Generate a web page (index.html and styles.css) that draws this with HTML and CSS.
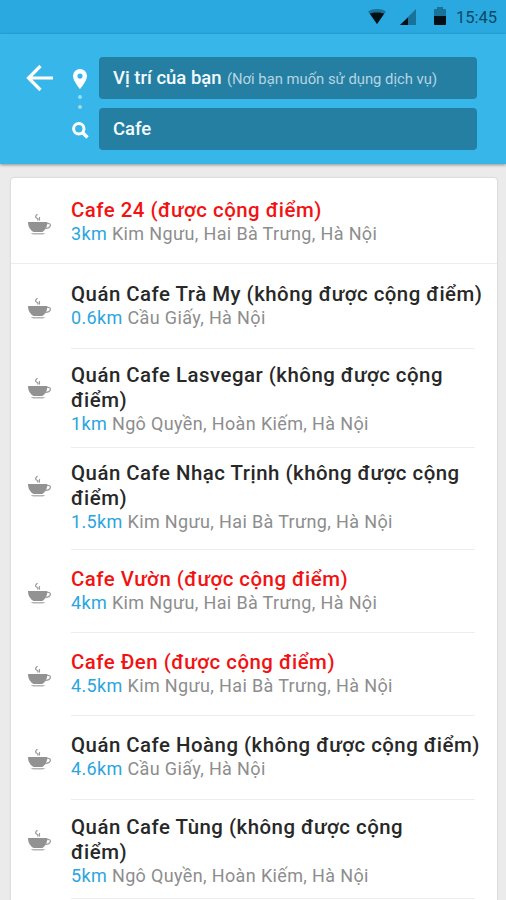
FILE: index.html
```html
<!DOCTYPE html>
<html lang="vi">
<head>
<meta charset="utf-8">
<title>Cafe</title>
<link rel="stylesheet" href="styles.css">
</head>
<body>
<svg class="defs" aria-hidden="true">
  <symbol id="cup" viewBox="0 0 24 22">
    <path d="M0 8h19.300c0 5-2.300 8.200-5 10H5.500C2.500 16.200 0 13 0 8z" fill="#929292"/>
    <path d="M18.800 9.500c5-1.300 5.200 4.800-1.800 5" fill="none" stroke="#a0a0a0" stroke-width="1.300"/>
    <path d="M2.500 19h15l-2.500 1.500H5z" fill="#b4b4b4"/>
    <path d="M9.500 0c-2.600 2.200-2.200 3.400-.6 4.300s1 1.500.6 2.200M12 3.200c-1.700 1 .2 1.900-.8 3.300" fill="none" stroke="#999" stroke-width="1.200"/>
  </symbol>
</svg>
<div class="status">
  <svg class="wifi" width="18" height="16" viewBox="0 0 18 16"><path d="M0 2.500C5-.8 13-.8 18 2.500L9 15z" fill="#197299"/><path d="M1.800 4.500c4-1.500 10.400-1.500 14.400 0L9 15z" fill="#021016"/></svg>
  <svg class="signal" width="16" height="16" viewBox="0 0 16 16"><path d="M0 16 16 0v16z" fill="#197299"/><path d="M0 16 8 8.500V16z" fill="#021016"/></svg>
  <svg class="battery" width="12" height="18" viewBox="0 0 12 18"><path d="M0 3q0-1 1-1h2V0h6v2h2q1 0 1 1v7H0z" fill="#197299"/><path d="M0 9h12v8q0 1-1 1H1q-1 0-1-1z" fill="#021016"/></svg>
  <span class="clock">15:45</span>
</div>
<header class="header">
  <svg class="back" width="28" height="28" viewBox="0 0 28 28"><path d="M27 14H2.500M14.500 2 2.500 14l12 12" fill="none" stroke="#fff" stroke-width="3.200"/></svg>
  <div class="markers">
    <svg width="16" height="20" viewBox="0 0 16 20"><path fill-rule="evenodd" d="M8 0a7 7 0 0 0-7 7c0 5 7 13 7 13s7-8 7-13a7 7 0 0 0-7-7zm0 4.500a2.600 2.600 0 1 1 0 5.200 2.600 2.600 0 0 1 0-5.200z" fill="#fff"/></svg>
    <i class="dot"></i><i class="dot"></i>
    <svg class="search" width="17" height="17" viewBox="0 0 17 17"><circle cx="6.800" cy="6.800" r="5.200" fill="none" stroke="#fff" stroke-width="3"/><path d="m10.500 10.500 5 5" stroke="#fff" stroke-width="3.400"/></svg>
  </div>
  <div class="fields">
    <div class="field"><span class="place">Vị trí của bạn</span><span class="hint">(Nơi bạn muốn sử dụng dịch vụ)</span></div>
    <div class="field"><span class="query">Cafe</span></div>
  </div>
</header>
<main class="card">
  <section class="row first"><svg class="cup"><use href="#cup"/></svg><div class="info"><h2 class="red">Cafe 24 (được cộng điểm)</h2><p><b>3km</b> Kim Ngưu, Hai Bà Trưng, Hà Nội</p></div></section>
  <section class="row second"><svg class="cup"><use href="#cup"/></svg><div class="info"><h2>Quán Cafe Trà My (không được cộng điểm)</h2><p><b>0.6km</b> Cầu Giấy, Hà Nội</p></div></section>
  <section class="row double third"><svg class="cup"><use href="#cup"/></svg><div class="info"><h2>Quán Cafe Lasvegar (không được cộng<br>điểm)</h2><p><b>1km</b> Ngô Quyền, Hoàn Kiếm, Hà Nội</p></div></section>
  <section class="row double fourth"><svg class="cup"><use href="#cup"/></svg><div class="info"><h2>Quán Cafe Nhạc Trịnh (không được cộng<br>điểm)</h2><p><b>1.5km</b> Kim Ngưu, Hai Bà Trưng, Hà Nội</p></div></section>
  <section class="row"><svg class="cup"><use href="#cup"/></svg><div class="info"><h2 class="red">Cafe Vườn (được cộng điểm)</h2><p><b>4km</b> Kim Ngưu, Hai Bà Trưng, Hà Nội</p></div></section>
  <section class="row"><svg class="cup"><use href="#cup"/></svg><div class="info"><h2 class="red">Cafe Đen (được cộng điểm)</h2><p><b>4.5km</b> Kim Ngưu, Hai Bà Trưng, Hà Nội</p></div></section>
  <section class="row seventh"><svg class="cup"><use href="#cup"/></svg><div class="info"><h2>Quán Cafe Hoàng (không được cộng điểm)</h2><p><b>4.6km</b> Cầu Giấy, Hà Nội</p></div></section>
  <section class="row double eighth"><svg class="cup"><use href="#cup"/></svg><div class="info"><h2>Quán Cafe Tùng (không được cộng<br>điểm)</h2><p><b>5km</b> Ngô Quyền, Hoàn Kiếm, Hà Nội</p></div></section>
</main>
</body>
</html>
```
FILE: styles.css
```css
* { box-sizing: border-box; }
body { margin: 0; height: 900px; overflow: hidden; background: #ebebeb; font-family: Roboto, "Noto Sans", sans-serif; }
.defs { display: none; }
.status { height: 34px; background: #29a9df; display: flex; align-items: flex-start; padding: 8px 8px 0 368px; }
.status svg { flex: none; }
.wifi { margin-top: 1px; }
.signal { margin: 1px 0 0 14px; }
.battery { margin: -1px 0 0 18px; }
.clock { margin-left: 10px; font-size: 16.500px; line-height: 19px; color: #0b4863; white-space: nowrap; }
.header { height: 130px; background: #36b6e9; box-shadow: 0 1px 3px rgba(0,0,0,.4); display: flex; align-items: flex-start; padding: 23px 29px 0 26px; }
.back { margin-top: 7px; flex: none; }
.markers { width: 18px; margin: 12px 0 0 17px; display: flex; flex-direction: column; align-items: center; flex: none; }
.dot { width: 4px; height: 4px; border-radius: 50%; background: #9bdcf4; margin-top: 6px; }
.search { margin-top: 13px; }
.fields { flex: 1; margin-left: 10px; display: grid; gap: 9px; }
.field { height: 42px; border-radius: 4px; background: #257fa3; padding-left: 14px; display: flex; align-items: baseline; line-height: 42px; color: #f4fbfe; white-space: nowrap; }
.place, .query { font-size: 18.500px; font-weight: 500; }
.place { width: 109px; }
.hint { margin-left: 5px; font-size: 14.800px; color: #b5d5e2; }
.card { margin: 14px 9px 0 11px; height: 740px; background: #fff; border-radius: 3px 3px 0 0; box-shadow: 0 0 2px rgba(0,0,0,.22); overflow: hidden; }
.row { display: flex; height: 83px; padding-left: 17px; --top: 17px; }
.cup { width: 24px; height: 22px; margin-top: calc(var(--top) + 16px); flex: none; }
.info { flex: 1; min-width: 0; margin: 0 22px 0 19px; padding-top: var(--top); border-bottom: 1px solid #ededed; white-space: nowrap; }
.double .cup { margin-top: calc(var(--top) + 15px); }
.first { height: 86px; --top: 20px; border-bottom: 1px solid #ededed; }
.first .info { border: 0; }
.second { height: 85px; --top: 18px; }
.third { height: 99px; --top: 14px; }
.fourth { height: 102px; --top: 13px; }
.seventh { height: 84px; }
.eighth { height: 99px; --top: 15px; }
h2 { margin: 0; font-size: 20.400px; line-height: 25px; font-weight: 500; letter-spacing: .5px; color: #282828; }
.red { color: #f31212; }
p { margin: 0; font-size: 18px; line-height: 22px; letter-spacing: .36px; color: #8d8d8d; }
b { font-weight: 400; color: #2ba5e0; }
```
